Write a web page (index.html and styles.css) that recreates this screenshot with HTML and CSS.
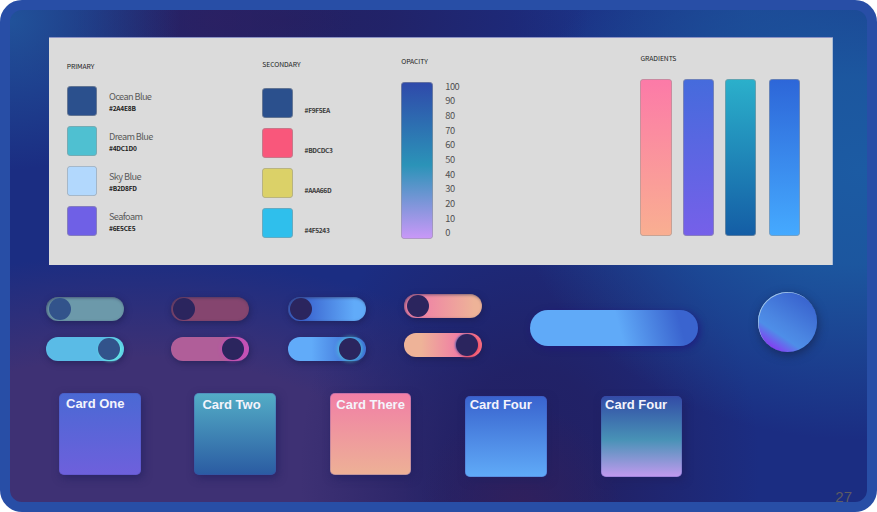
FILE: index.html
```html
<!DOCTYPE html>
<html lang="en">
<head>
<meta charset="utf-8">
<title>Style guide</title>
<link rel="stylesheet" href="styles.css">
</head>
<body>
<main class="slide">
  <section class="palette">
    <div class="col primary">
      <h2>PRIMARY</h2>
      <div class="swatches">
        <div class="row"><span class="swatch ocean"></span><div class="label"><span class="name">Ocean Blue</span><b>#2A4E8B</b></div></div>
        <div class="row"><span class="swatch dream"></span><div class="label"><span class="name">Dream Blue</span><b>#4DC1D0</b></div></div>
        <div class="row"><span class="swatch sky"></span><div class="label"><span class="name">Sky Blue</span><b>#B2D8FD</b></div></div>
        <div class="row"><span class="swatch seafoam"></span><div class="label"><span class="name">Seafoam</span><b>#6E5CE5</b></div></div>
      </div>
    </div>
    <div class="col secondary">
      <h2>SECONDARY</h2>
      <div class="swatches">
        <div class="row"><span class="swatch ocean"></span><b>#F9F5EA</b></div>
        <div class="row"><span class="swatch rose"></span><b>#BDCDC3</b></div>
        <div class="row"><span class="swatch lime"></span><b>#AAA66D</b></div>
        <div class="row"><span class="swatch cyan"></span><b>#4F5243</b></div>
      </div>
    </div>
    <div class="col opacity">
      <h2>OPACITY</h2>
      <div class="scale">
        <span class="bar spectrum"></span>
        <div class="ticks"><span>100</span><span>90</span><span>80</span><span>70</span><span>60</span><span>50</span><span>40</span><span>30</span><span>20</span><span>10</span><span>0</span></div>
      </div>
    </div>
    <div class="col gradients">
      <h2>GRADIENTS</h2>
      <div class="bars">
        <span class="bar peach"></span><span class="bar violet"></span><span class="bar teal"></span><span class="bar azure"></span>
      </div>
    </div>
  </section>

  <section class="controls">
    <div class="pair p1">
      <div class="toggle off sage"><span class="knob"></span></div>
      <div class="toggle on aqua"><span class="knob"></span></div>
    </div>
    <div class="pair p2">
      <div class="toggle off plum"><span class="knob"></span></div>
      <div class="toggle on orchid"><span class="knob"></span></div>
    </div>
    <div class="pair p3">
      <div class="toggle off blue"><span class="knob"></span></div>
      <div class="toggle on blue-on"><span class="knob"></span></div>
    </div>
    <div class="pair p4">
      <div class="toggle off coral"><span class="knob"></span></div>
      <div class="toggle on coral-on"><span class="knob"></span></div>
    </div>
    <div class="pill"></div>
    <div class="orb"></div>
  </section>

  <section class="cards">
    <div class="card c1">Card One</div>
    <div class="card c2">Card Two</div>
    <div class="card c3">Card There</div>
    <div class="card c4">Card Four</div>
    <div class="card c5">Card Four</div>
  </section>
  <span class="page">27</span>
</main>
</body>
</html>
```
FILE: styles.css
```css
* { box-sizing: border-box; }
body { margin: 0; background: #fff; overflow: hidden; }
h2, b, .name, .ticks { font-family: "Noto Sans CJK SC", "Noto Sans", sans-serif; }

.slide {
  position: relative;
  width: 877px;
  height: 512px;
  padding: 27px 34px 0 39px;
  border-radius: 22px;
  overflow: hidden;
  background:
    radial-gradient(ellipse 170px 150px at 10px 20px, #21529a 0%, #21529a00 100%),
    radial-gradient(ellipse 140px 90px at 215px 20px, #2e2062aa 0%, #2e206200 100%),
    radial-gradient(ellipse 310px 95px at 280px 20px, #232062 0%, #232062cc 35%, #23206200 100%),
    radial-gradient(ellipse 350px 270px at 860px 170px, #1c5ba3 0%, #1c58a0f5 35%, #1c58a000 100%),
    radial-gradient(ellipse 240px 130px at 750px 10px, #1d4a96aa 0%, #1d4a9600 100%),
    radial-gradient(ellipse 100px 100px at 520px 505px, #30205d 0%, #30205d00 100%),
    radial-gradient(ellipse 230px 290px at 530px 470px, #222063 0%, #222063dd 35%, #22206300 100%),
    radial-gradient(ellipse 470px 245px at 130px 500px, #3e3174 0%, #3e3174 58%, #3e317400 100%),
    #1b2d82;
  background-origin: border-box;
  border: 10px solid #284ea6;
  font-family: "Liberation Sans", Arial, sans-serif;
}

.palette {
  display: grid;
  grid-template-columns: 195.6px 139px 239.2px 1fr;
  width: 784px;
  height: 228px;
  padding-left: 17.7px;
  background: #dbdbdb;
  box-shadow: inset 0 1px #8c93c4, inset -1px 0 #aabbd4;
}
h2 {
  height: 11px;
  margin: 0;
  color: #222;
  font-size: 6.8px;
  font-weight: 400;
  line-height: 10px;
  letter-spacing: -.07px;
}
.primary { padding-top: 23.5px; }
.secondary { padding-top: 21.5px; }
.opacity { padding-top: 19px; }
.gradients { padding-top: 15.8px; }

.swatches { display: flex; flex-direction: column; gap: 10.1px; margin-top: 14.5px; }
.secondary .swatches { margin-top: 18px; }
.row { display: flex; height: 30px; gap: 12px; }
.swatch {
  width: 30.3px;
  height: 30px;
  border-radius: 4px;
  box-shadow: inset 0 0 0 .8px #999a;
}
.ocean { background: #2b508d; }
.dream { background: #4fc0d1; }
.sky { background: #b2d8fd; }
.seafoam { background: #6f60e6; }
.rose { background: #f9577b; }
.lime { background: #dbd168; }
.cyan { background: #2fbfec; }
.label { display: flex; flex-direction: column; padding-top: 3.8px; }
.name { height: 12px; color: #5c5c5c; font-size: 9.2px; line-height: 12px; letter-spacing: -.6px; white-space: nowrap; }
b { height: 12px; color: #1c1c1c; font-size: 6.6px; font-weight: 700; line-height: 12px; letter-spacing: -.24px; }
.secondary b { margin-top: 16.4px; color: #3a3a3a; letter-spacing: -.33px; }

.bar { width: 31.5px; height: 157px; border-radius: 4px; box-shadow: inset 0 0 0 .8px #999a; }
.scale { display: flex; gap: 12.5px; margin-top: 15px; }
.spectrum { background: linear-gradient(#2f49aa, #2b93b8 53%, #ca98f8); }
.ticks { display: flex; flex-direction: column; margin-top: -3.3px; color: #505050; font-size: 9.3px; line-height: 14.65px; letter-spacing: -.5px; }
.bars { display: flex; margin-top: 15.2px; }
.bars .bar:nth-child(2) { margin-left: 11px; }
.bars .bar:nth-child(3) { margin-left: 10.5px; }
.bars .bar:nth-child(4) { margin-left: 12.3px; }
.peach { background: linear-gradient(#fc7aa8, #f9af91); }
.violet { background: linear-gradient(#456bdc, #7660e9); }
.teal { background: linear-gradient(#2bb0cb, #145da5); }
.azure { background: linear-gradient(#2d66d8, #45aaff); }

.controls { display: flex; height: 100px; padding-top: 27px; margin-left: -3px; }
.pair { display: flex; flex-direction: column; gap: 16px; padding-top: 5.3px; }
.p2 { margin-left: 46.6px; }
.p3 { margin-left: 38.7px; }
.p4 { margin-left: 38.3px; padding-top: 2px; gap: 15.3px; }
.toggle {
  display: flex;
  align-items: center;
  width: 78.2px;
  height: 24px;
  padding: 0 2.5px;
  border-radius: 12px;
  box-shadow: 1px 2px 6px #1a1a4b99;
}
.off { box-shadow: 1px 2px 6px #1a1a4b99, inset 1px 1px 3px #30305599; }
.on { justify-content: flex-end; padding-right: 4.7px; }
.knob { width: 22px; height: 22px; border-radius: 50%; background: #2b255e; }
.sage { background: #6c99aa; }
.aqua { background: linear-gradient(90deg, #5abbe6 75%, #5ed0e5); }
.sage .knob, .aqua .knob { background: #32538b; }
.aqua .knob { box-shadow: 1px 1px 3px #68f2e7; }
.plum { background: #85456f; }
.orchid { background: linear-gradient(90deg, #b05e99 70%, #c353b7); }
.orchid .knob { box-shadow: 0 0 4px #d043c4; }
.blue { background: linear-gradient(90deg, #3a64cf 20%, #61abf9 85%); }
.blue-on { background: linear-gradient(90deg, #61abf9 30%, #3e6fd5 85%); }
.blue-on .knob { box-shadow: 0 0 4px 1px #52d5ddcc; }
.coral { background: linear-gradient(90deg, #ef81a6 20%, #eeb398 90%); }
.coral-on { background: linear-gradient(90deg, #eeb398 22%, #f07ea4 70%, #f46c7f); }
.coral-on .knob { box-shadow: 1px 1px 3px #f4495e, -1px 0 2px #5369b8; }
.pill {
  width: 168.5px;
  height: 36px;
  margin: 18px 0 0 47.5px;
  border-radius: 18px;
  background: linear-gradient(75deg, #60aaf8 53%, #3a64cf 88%);
  box-shadow: 2px 2px 7px #20107caa;
}
.orb {
  width: 59.5px;
  height: 59.5px;
  margin-left: 59.5px;
  border-radius: 50%;
  background: linear-gradient(34deg, #863cf2 13%, #4e8ee8 32%, #4b86e2 45%, #3a65cf 85%);
  box-shadow: 1px 3px 10px #172653cc, inset .7px .7px .5px #a5c8e7;
}

.cards { display: flex; margin: 28.3px 0 0 10px; gap: 53.8px; }
.card {
  width: 81.6px;
  height: 81.7px;
  padding: 3.2px 0 0 7px;
  border-radius: 5px;
  box-shadow: 2px 3px 9px #20205eaa, inset 0 0 0 .7px #4444aa55;
  color: #f4f4fc;
  font-size: 13px;
  font-weight: 700;
  line-height: 15px;
  white-space: nowrap;
}
.c1 { background: linear-gradient(#4a69d4, #6e60dc); }
.c2 { padding-top: 4px; padding-left: 8px; background: linear-gradient(#53adc6, #2a5ba2); }
.c3 { padding-top: 4px; padding-left: 6.5px; background: linear-gradient(#f17fa6, #edb196); }
.c4 { margin-top: 2.4px; padding: 1.6px 0 0 4.5px; background: linear-gradient(#3963ce, #60abf8); }
.c5 { margin-top: 2.4px; padding: 1.6px 0 0 4.5px; background: linear-gradient(#324ba6, #4892b6 54%, #c29aef); }
.page { position: absolute; right: 15px; bottom: -3px; color: #5e5c63; font-size: 15px; line-height: 17px; }
```
